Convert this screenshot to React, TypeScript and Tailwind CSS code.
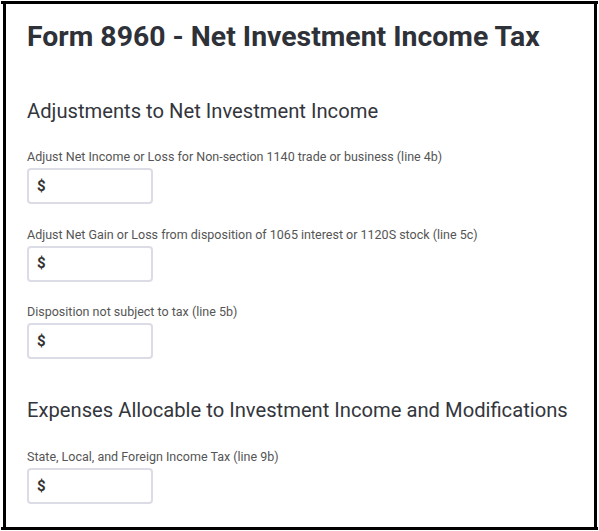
import React from "react";

const Field = ({ label }: { label: string }) => (
  <div className="flex flex-col">
    <label className="text-[12.5px] leading-[16px] text-[#555555]">{label}</label>
    <div className="mt-[3px] flex h-[36px] w-[126px] items-center rounded-[4px] border-2 border-[#dcdce6] bg-white pl-[8px]">
      <span className="text-[15px] font-bold text-[#333333]">$</span>
    </div>
  </div>
);

export default function App() {
  return (
    <div className="h-[531px] w-[599px] bg-white" style={{ fontFamily: "Roboto, 'Liberation Sans', sans-serif" }}>
      <div className="ml-[1px] mt-[1px] h-[529px] w-[597px] border-y-[3px] border-black">
        <div className="ml-[2px] mt-[-3px] h-[529px] w-[594px] border-x-[3px] border-black pl-[21px] pt-[19px]">
          <h1 className="text-[28.4px] font-bold leading-[34px] text-[#2e3138]">Form 8960 - Net Investment Income Tax</h1>
          <h2 className="mt-[45px] text-[20.2px] leading-[24px] text-[#33363c]">Adjustments to Net Investment Income</h2>
          <div className="mt-[26px] flex flex-col gap-[22.5px]">
            <Field label="Adjust Net Income or Loss for Non-section 1140 trade or business (line 4b)" />
            <Field label="Adjust Net Gain or Loss from disposition of 1065 interest or 1120S stock (line 5c)" />
            <Field label="Disposition not subject to tax (line 5b)" />
          </div>
          <h2 className="mt-[39px] text-[20.2px] leading-[24px] text-[#33363c]">Expenses Allocable to Investment Income and Modifications</h2>
          <div className="mt-[27px] flex flex-col">
            <Field label="State, Local, and Foreign Income Tax (line 9b)" />
          </div>
        </div>
      </div>
    </div>
  );
}
